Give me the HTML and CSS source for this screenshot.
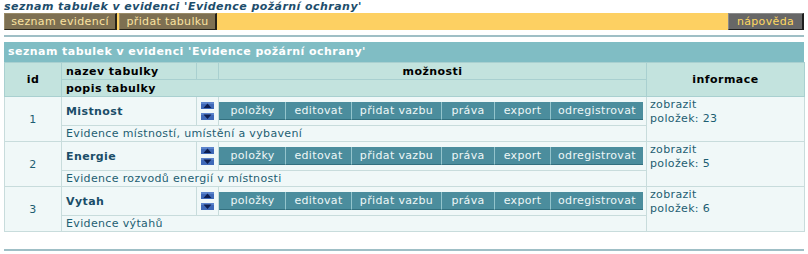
FILE: index.html
```html
<!DOCTYPE html>
<html lang="cs">
<head>
<meta charset="utf-8">
<title>seznam tabulek</title>
<link rel="stylesheet" href="styles.css">
</head>
<body>
<div class="page">
  <h1 class="title">seznam tabulek v evidenci 'Evidence požární ochrany'</h1>
  <div class="menubar">
    <div class="menu-left">
      <a class="mbtn m-list">seznam evidencí</a>
      <a class="mbtn m-add">přidat tabulku</a>
    </div>
    <a class="mbtn help">nápověda</a>
  </div>
  <div class="sep"></div>
  <div class="panel-title">seznam tabulek v evidenci 'Evidence požární ochrany'</div>
  <table class="grid">
    <colgroup>
      <col class="c-id"><col class="c-name"><col class="c-arr"><col class="c-act"><col class="c-info">
    </colgroup>
    <thead>
      <tr class="h1">
        <th rowspan="2" class="center">id</th>
        <th class="left">nazev tabulky</th>
        <th></th>
        <th class="center">možnosti</th>
        <th rowspan="2" class="center">informace</th>
      </tr>
      <tr class="h2">
        <th colspan="3" class="left">popis tabulky</th>
      </tr>
    </thead>
    <tbody>
      <tr class="r-main">
        <td rowspan="2" class="id">1</td>
        <td class="name">Mistnost</td>
        <td class="arr">
          <div class="arrows">
            <svg width="13" height="7" viewBox="0 0 13 7"><rect width="13" height="7" fill="#3f69b8"/><rect x="0" y="0" width="13" height="2" fill="#5c84cc"/><polygon points="2.5,6 10.5,6 6.5,1.5" fill="#0d1d4e"/></svg>
            <svg width="13" height="7" viewBox="0 0 13 7"><rect width="13" height="7" fill="#3f69b8"/><rect x="0" y="0" width="13" height="2" fill="#5c84cc"/><polygon points="2.5,1.5 10.5,1.5 6.5,6" fill="#0d1d4e"/></svg>
          </div>
        </td>
        <td class="act">
          <div class="btns"><a class="btn b-items">položky</a><a class="btn b-edit">editovat</a><a class="btn b-link">přidat vazbu</a><a class="btn b-rights">práva</a><a class="btn b-export">export</a><a class="btn b-unreg">odregistrovat</a></div>
        </td>
        <td rowspan="2" class="info">zobrazit<br>položek: 23</td>
      </tr>
      <tr class="r-desc">
        <td colspan="3" class="desc">Evidence místností, umístění a vybavení</td>
      </tr>
      <tr class="r-main">
        <td rowspan="2" class="id">2</td>
        <td class="name">Energie</td>
        <td class="arr">
          <div class="arrows">
            <svg width="13" height="7" viewBox="0 0 13 7"><rect width="13" height="7" fill="#3f69b8"/><rect x="0" y="0" width="13" height="2" fill="#5c84cc"/><polygon points="2.5,6 10.5,6 6.5,1.5" fill="#0d1d4e"/></svg>
            <svg width="13" height="7" viewBox="0 0 13 7"><rect width="13" height="7" fill="#3f69b8"/><rect x="0" y="0" width="13" height="2" fill="#5c84cc"/><polygon points="2.5,1.5 10.5,1.5 6.5,6" fill="#0d1d4e"/></svg>
          </div>
        </td>
        <td class="act">
          <div class="btns"><a class="btn b-items">položky</a><a class="btn b-edit">editovat</a><a class="btn b-link">přidat vazbu</a><a class="btn b-rights">práva</a><a class="btn b-export">export</a><a class="btn b-unreg">odregistrovat</a></div>
        </td>
        <td rowspan="2" class="info">zobrazit<br>položek: 5</td>
      </tr>
      <tr class="r-desc">
        <td colspan="3" class="desc">Evidence rozvodů energií v místnosti</td>
      </tr>
      <tr class="r-main">
        <td rowspan="2" class="id">3</td>
        <td class="name">Vytah</td>
        <td class="arr">
          <div class="arrows">
            <svg width="13" height="7" viewBox="0 0 13 7"><rect width="13" height="7" fill="#3f69b8"/><rect x="0" y="0" width="13" height="2" fill="#5c84cc"/><polygon points="2.5,6 10.5,6 6.5,1.5" fill="#0d1d4e"/></svg>
            <svg width="13" height="7" viewBox="0 0 13 7"><rect width="13" height="7" fill="#3f69b8"/><rect x="0" y="0" width="13" height="2" fill="#5c84cc"/><polygon points="2.5,1.5 10.5,1.5 6.5,6" fill="#0d1d4e"/></svg>
          </div>
        </td>
        <td class="act">
          <div class="btns"><a class="btn b-items">položky</a><a class="btn b-edit">editovat</a><a class="btn b-link">přidat vazbu</a><a class="btn b-rights">práva</a><a class="btn b-export">export</a><a class="btn b-unreg">odregistrovat</a></div>
        </td>
        <td rowspan="2" class="info">zobrazit<br>položek: 6</td>
      </tr>
      <tr class="r-desc">
        <td colspan="3" class="desc">Evidence výtahů</td>
      </tr>
    </tbody>
  </table>
  <div class="sep bottom"></div>
</div>
</body>
</html>
```

FILE: styles.css
```css
html, body {
  margin: 0;
  padding: 0;
  background: #ffffff;
}
body {
  font-family: "DejaVu Sans", Verdana, sans-serif;
  font-size: 11px;
  letter-spacing: 0.35px;
  color: #1d5e72;
}
.page {
  width: 800px;
  margin: 0 4px;
}
.title {
  margin: 0;
  height: 13px;
  line-height: 13px;
  font-size: 11px;
  font-weight: bold;
  font-style: italic;
  letter-spacing: 0.45px;
  color: #1d4d6b;
}
.menubar {
  display: flex;
  justify-content: space-between;
  height: 17px;
  background: #fdd062;
}
.menu-left {
  display: flex;
  gap: 2px;
}
.mbtn {
  display: block;
  box-sizing: border-box;
  height: 17px;
  line-height: 15px;
  text-align: center;
  background: #7e7052;
  color: #fbe3a0;
  border-top: 1px solid #9a8b68;
  border-left: 1px solid #9a8b68;
  border-right: 2px solid #262218;
  border-bottom: 1px solid #262218;
  font-size: 11px;
}
.m-list { width: 113px; }
.m-add { width: 98px; }
.mbtn.help {
  width: 76px;
  background: #676767;
  color: #ffd860;
  border-top-color: #8a8a8a;
  border-left-color: #8a8a8a;
  border-right-color: #1e1e1e;
  border-bottom-color: #1e1e1e;
}
.sep {
  height: 2px;
  margin-top: 5px;
  background: #9fbfc6;
}
.sep.bottom {
  margin-top: 17px;
}
.panel-title {
  margin-top: 5px;
  height: 20px;
  line-height: 20px;
  padding-left: 4px;
  background: #80bdc4;
  color: #ffffff;
  font-weight: bold;
  letter-spacing: 0.45px;
}
.grid {
  width: 800px;
  table-layout: fixed;
  border-collapse: collapse;
  background: #f0f8f8;
}
.c-id { width: 57px; }
.c-name { width: 135px; }
.c-arr { width: 22px; }
.c-act { width: 428px; }
.c-info { width: 158px; }
.grid th {
  background: #c3e3de;
  color: #000000;
  font-weight: bold;
  letter-spacing: 0.45px;
  border: 1px solid #a9d0d0;
  padding: 0 4px;
  height: 16px;
  line-height: 15px;
}
.grid th.left { text-align: left; }
.grid th.center { text-align: center; }
.grid td {
  border: 1px solid #c8dcdc;
  padding: 0 4px;
}
.r-main td { height: 28px; }
.r-desc td { height: 15px; line-height: 14px; }
.id {
  text-align: center;
}
.name {
  font-weight: bold;
  letter-spacing: 0.4px;
  color: #1a4d68;
}
.grid td.arr {
  padding: 0;
}
.arrows {
  display: flex;
  flex-direction: column;
  align-items: center;
  gap: 4px;
}
.arrows svg { display: block; }
.grid td.act {
  padding: 0;
}
.btns {
  display: flex;
  height: 18px;
}
.btn {
  display: block;
  flex: none;
  box-sizing: border-box;
  height: 18px;
  line-height: 17px;
  text-align: center;
  background: #4b8d9d;
  color: #eef7f7;
  border-left: 1px solid #94c4cc;
  border-bottom: 1px solid #33707f;
}
.b-items { width: 66px; border-left-color: #4b8d9d; }
.b-edit { width: 66px; }
.b-link { width: 90px; }
.b-rights { width: 53px; }
.b-export { width: 56px; }
.b-unreg { width: 93px; }
.grid td.info {
  vertical-align: top;
  padding: 1px 3px;
  line-height: 14px;
}
.desc {
  color: #1d5e72;
}
```
